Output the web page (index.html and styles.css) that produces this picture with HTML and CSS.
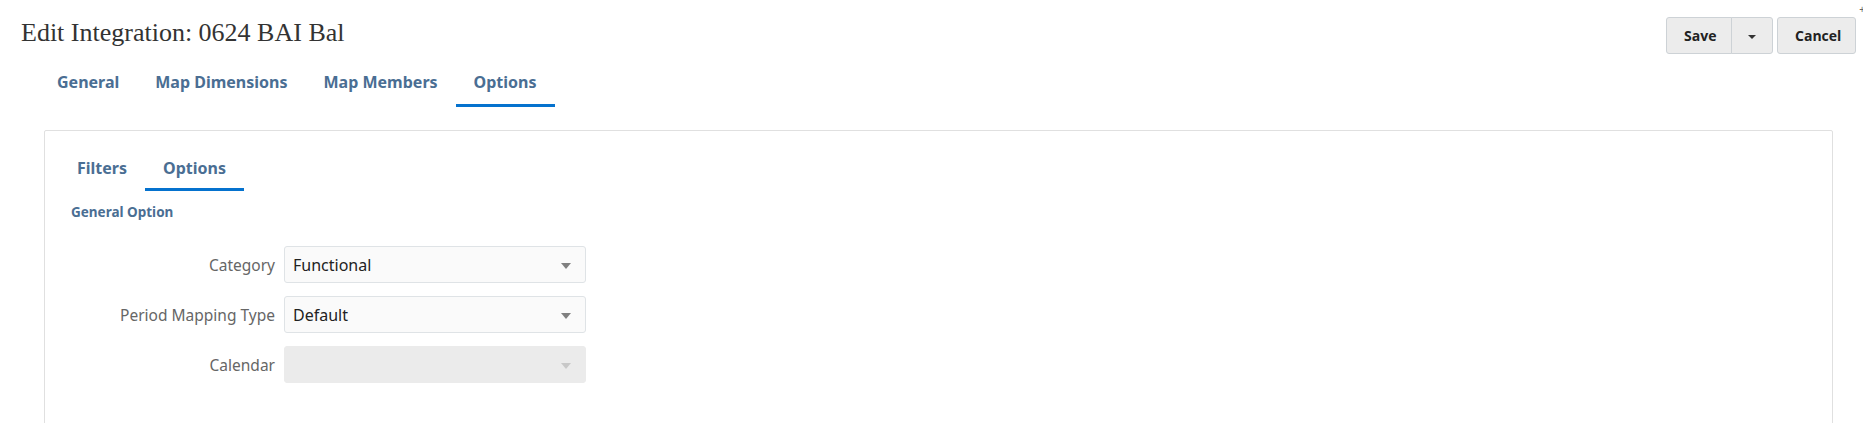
FILE: index.html
```html
<!DOCTYPE html>
<html lang="en">
<head>
    <meta charset="UTF-8">
    <meta name="viewport" content="width=device-width, initial-scale=1.0">
    <title>Edit Integration</title>
    <link rel="stylesheet" href="styles.css">
</head>
<body>
    <div class="header">
        <h1 class="page-title">Edit Integration: 0624 BAI Bal</h1>
        <div class="btn-container">
            <button class="btn btn-save">Save</button>
            <button class="btn btn-menu"><span class="caret"></span></button>
            <button class="btn btn-cancel">Cancel</button>
            <span class="corner-mark">+</span>
        </div>
    </div>

    <div class="tabs main-tabs">
        <a class="tab">General</a>
        <a class="tab">Map Dimensions</a>
        <a class="tab">Map Members</a>
        <a class="tab active">Options</a>
    </div>

    <div class="panel">
        <div class="tabs sub-tabs">
            <a class="tab">Filters</a>
            <a class="tab active">Options</a>
        </div>
        <h2 class="section-title">General Option</h2>

        <div class="form">
            <div class="form-row">
                <label class="form-label">Category</label>
                <div class="select">
                    <span class="select-value">Functional</span>
                    <span class="select-arrow"></span>
                </div>
            </div>
            <div class="form-row">
                <label class="form-label">Period Mapping Type</label>
                <div class="select">
                    <span class="select-value">Default</span>
                    <span class="select-arrow"></span>
                </div>
            </div>
            <div class="form-row">
                <label class="form-label">Calendar</label>
                <div class="select disabled">
                    <span class="select-value"></span>
                    <span class="select-arrow"></span>
                </div>
            </div>
        </div>
    </div>
</body>
</html>
```

FILE: styles.css
```css
body {
    margin: 0;
    padding: 0;
    background-color: #fff;
    font-family: "Noto Sans", "Open Sans", sans-serif;
    color: #333;
    overflow: hidden;
}
.header {
    display: flex;
    justify-content: space-between;
    align-items: flex-start;
    height: 60px;
}
.page-title {
    margin: 0;
    padding: 16px 0 0 21px;
    font-family: "Liberation Serif", Georgia, serif;
    font-weight: normal;
    font-size: 26px;
    line-height: 34px;
    color: #333;
}
.btn-container {
    position: relative;
    display: flex;
    padding: 17px 7px 0 0;
}
.btn {
    height: 37px;
    padding: 0 17px;
    background-color: #ececec;
    border: 1px solid #cdd2d6;
    border-radius: 3px;
    font-family: "Open Sans", "Noto Sans", sans-serif;
    font-weight: bold;
    font-size: 14px;
    color: #222;
    cursor: pointer;
}
.btn-save {
    width: 66px;
    border-radius: 3px 0 0 3px;
}
.btn-menu {
    width: 42px;
    padding: 0;
    margin-left: -1px;
    border-radius: 0 3px 3px 0;
}
.btn-cancel {
    width: 79px;
    margin-left: 4px;
}
.caret {
    display: inline-block;
    border-left: 4px solid transparent;
    border-right: 4px solid transparent;
    border-top: 4px solid #333;
    vertical-align: middle;
}
.corner-mark {
    position: absolute;
    top: 2px;
    right: -2px;
    font-size: 10px;
    color: #666;
}
.tabs {
    display: flex;
}
.tab {
    display: block;
    font-weight: bold;
    color: #4a6e93;
    text-decoration: none;
    border-bottom: 3px solid transparent;
}
.tab.active {
    border-bottom-color: #0572ce;
}
.main-tabs {
    padding-left: 39px;
}
.main-tabs .tab {
    padding: 0 18px;
    font-size: 16px;
    line-height: 44px;
}
.panel {
    margin: 23px 30px 0 44px;
    height: 400px;
    border: 1px solid #e0e0e0;
    border-radius: 2px;
}
.sub-tabs {
    padding: 17px 0 0 14px;
}
.sub-tabs .tab {
    padding: 0 18px;
    font-size: 16px;
    line-height: 40px;
}
.section-title {
    margin: 0;
    padding: 12px 0 0 26px;
    font-size: 13.5px;
    line-height: 18px;
    color: #4a6e93;
}
.form {
    padding-top: 25px;
}
.form-row {
    display: flex;
    align-items: center;
    margin-bottom: 13px;
}
.form-label {
    width: 230px;
    padding-right: 9px;
    text-align: right;
    font-size: 15.5px;
    color: #666;
}
.select {
    display: flex;
    align-items: center;
    justify-content: space-between;
    box-sizing: border-box;
    width: 302px;
    height: 37px;
    padding: 0 14px 0 8px;
    background-color: #fafafa;
    border: 1px solid #dfe3e6;
    border-radius: 3px;
}
.select-value {
    font-size: 16px;
    color: #222;
}
.select-arrow {
    border-left: 5px solid transparent;
    border-right: 5px solid transparent;
    border-top: 6px solid #808080;
    margin-top: 2px;
}
.select.disabled {
    background-color: #ebebeb;
    border-color: #ebebeb;
}
.select.disabled .select-arrow {
    border-top-color: #c8c8c8;
}
```
